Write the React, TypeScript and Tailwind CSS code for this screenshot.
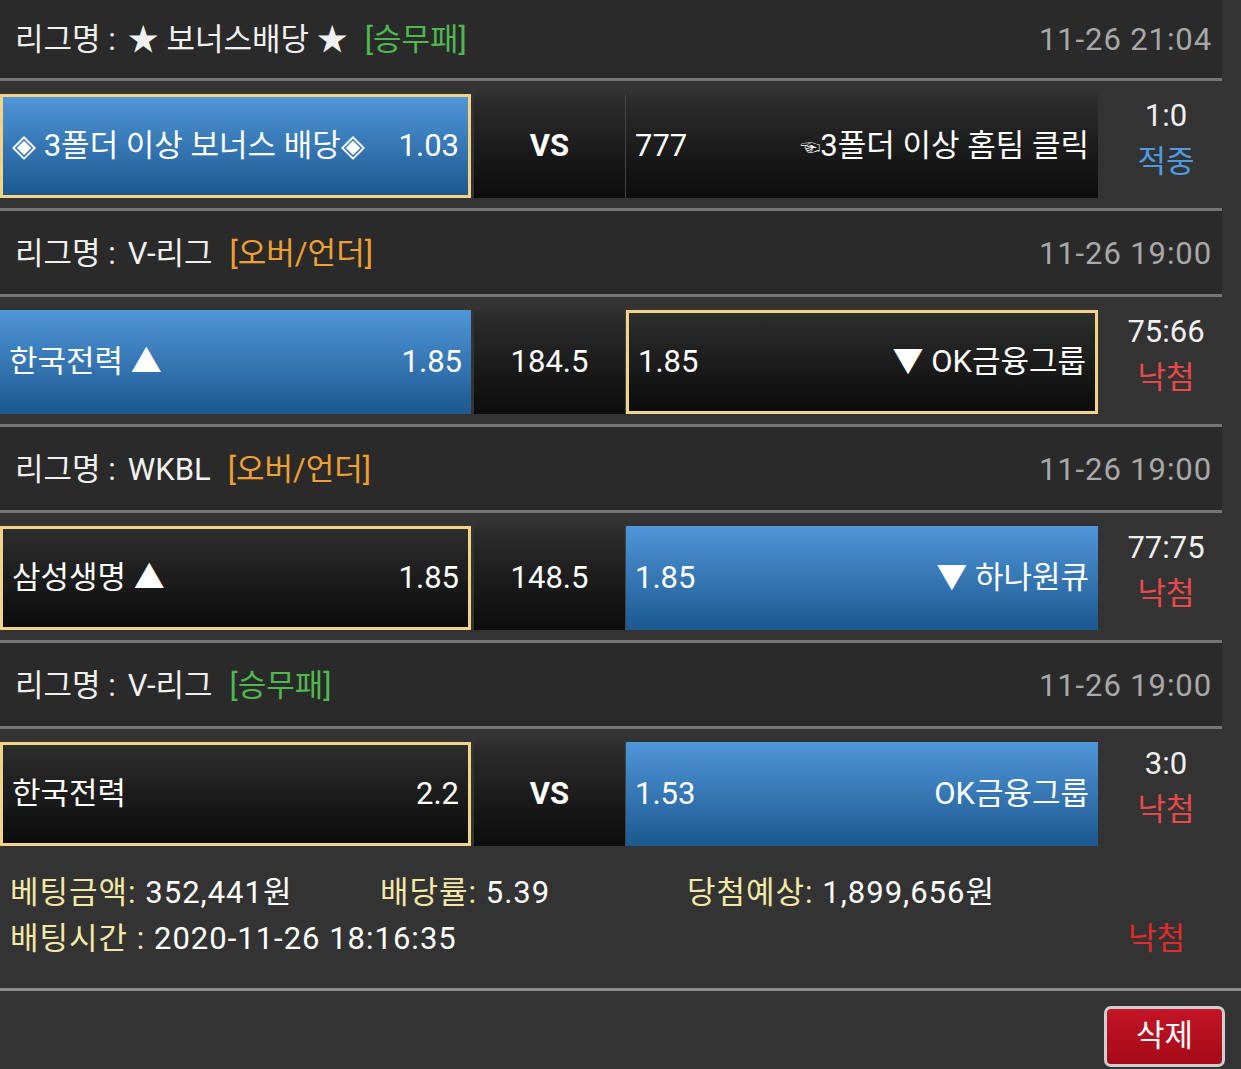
import React from 'react';

type Cell = {
  left: React.ReactNode;
  right: React.ReactNode;
  variant: 'blue' | 'dark';
  selected?: boolean;
};

type Game = {
  league: string;
  type: string;
  typeColor: string;
  date: string;
  home: Cell;
  mid: string;
  midBold?: boolean;
  away: Cell;
  score: string;
  result: string;
  resultColor: string;
};

const games: Game[] = [
  {
    league: '★ 보너스배당 ★',
    type: '[승무패]',
    typeColor: 'text-[#4fb84f]',
    date: '11-26 21:04',
    home: { left: '◈ 3폴더 이상 보너스 배당◈', right: '1.03', variant: 'blue', selected: true },
    mid: 'VS',
    midBold: true,
    away: {
      left: '777',
      right: (
        <>
          <span className="text-[20px] align-middle">☜</span>3폴더 이상 홈팀 클릭
        </>
      ),
      variant: 'dark',
    },
    score: '1:0',
    result: '적중',
    resultColor: 'text-[#4d9be0]',
  },
  {
    league: 'V-리그',
    type: '[오버/언더]',
    typeColor: 'text-[#f0a030]',
    date: '11-26 19:00',
    home: { left: '한국전력 ▲', right: '1.85', variant: 'blue' },
    mid: '184.5',
    away: { left: '1.85', right: '▼ OK금융그룹', variant: 'dark', selected: true },
    score: '75:66',
    result: '낙첨',
    resultColor: 'text-[#e8474c]',
  },
  {
    league: 'WKBL',
    type: '[오버/언더]',
    typeColor: 'text-[#f0a030]',
    date: '11-26 19:00',
    home: { left: '삼성생명 ▲', right: '1.85', variant: 'dark', selected: true },
    mid: '148.5',
    away: { left: '1.85', right: '▼ 하나원큐', variant: 'blue' },
    score: '77:75',
    result: '낙첨',
    resultColor: 'text-[#e8474c]',
  },
  {
    league: 'V-리그',
    type: '[승무패]',
    typeColor: 'text-[#4fb84f]',
    date: '11-26 19:00',
    home: { left: '한국전력', right: '2.2', variant: 'dark', selected: true },
    mid: 'VS',
    midBold: true,
    away: { left: '1.53', right: 'OK금융그룹', variant: 'blue' },
    score: '3:0',
    result: '낙첨',
    resultColor: 'text-[#e8474c]',
  },
];

function OddsCell({ cell, width }: { cell: Cell; width: string }) {
  const bg =
    cell.variant === 'blue'
      ? 'bg-gradient-to-b from-[#4f97d9] to-[#1c5890]'
      : 'bg-gradient-to-b from-[#2e2e2e] to-[#0c0c0c]';
  const border = cell.selected ? 'border-[3px] border-[#f2d387]' : '';
  return (
    <div className={`${width} h-[104px] ${bg} ${border} flex items-center justify-between px-[9px] text-white whitespace-nowrap`}>
      <span>{cell.left}</span>
      <span>{cell.right}</span>
    </div>
  );
}

export default function App() {
  return (
    <div
      className="w-[1241px] h-[1069px] overflow-hidden bg-[#333333] text-[31px] text-white"
      style={{ fontFamily: 'Roboto, "Noto Sans CJK KR", sans-serif' }}
    >
      <div className="w-[1222px]">
        {games.map((g, i) => (
          <div key={i}>
            <div
              className={`${i === 0 ? 'h-[81px] pt-[3px]' : 'h-[86px] pt-[4px]'} bg-[#2a2a2a] border-b-[3px] border-[#767676] flex items-center justify-between pl-[15px] pr-[10px]`}
            >
              <div className="flex items-center gap-[17px] text-[#f0f0f0]">
                <span>
                  리그명 :<span className="ml-[12px]">{g.league}</span>
                </span>
                <span className={g.typeColor}>{g.type}</span>
              </div>
              <span className="text-[#a8a8a8] tracking-[0.9px]">{g.date}</span>
            </div>
            <div className={`h-[130px] pt-[13px] ${i < games.length - 1 ? 'border-b-[3px] border-[#767676]' : ''}`}>
              <div className="flex items-start">
                <OddsCell cell={g.home} width="w-[471px]" />
                <div className="w-[152px] ml-[3px] h-[104px] bg-gradient-to-b from-[#2e2e2e] to-[#0c0c0c] border-r border-[#444] flex items-center justify-center">
                  <span className={g.midBold ? 'font-bold' : ''}>{g.mid}</span>
                </div>
                <OddsCell cell={g.away} width="w-[472px]" />
                <div className="flex-1 h-[104px] pl-[12px] flex flex-col items-center justify-center leading-[46px] -mt-[7px]">
                  <span className="text-[#f0f0f0]">{g.score}</span>
                  <span className={g.resultColor}>{g.result}</span>
                </div>
              </div>
            </div>
          </div>
        ))}
      </div>

      <div className="h-[132px] border-b-[3px] border-[#8a8a8a] pt-[11px] pl-[10px] pr-[56px] tracking-[1px]">
        <div className="flex items-center h-[46px]">
          <div className="w-[370px]">
            <span className="text-[#f3e8a6]">베팅금액:</span> 352,441원
          </div>
          <div className="w-[307px]">
            <span className="text-[#f3e8a6]">배당률:</span> 5.39
          </div>
          <div>
            <span className="text-[#f3e8a6]">당첨예상:</span> 1,899,656원
          </div>
        </div>
        <div className="flex items-center justify-between h-[46px]">
          <div>
            <span className="text-[#f3e8a6]">배팅시간 :</span> 2020-11-26 18:16:35
          </div>
          <span className="text-[#e22a2a] tracking-normal">낙첨</span>
        </div>
      </div>

      <div className="flex justify-end pt-[15px] pr-[16px]">
        <button className="w-[121px] h-[61px] rounded-[7px] border-[3px] border-[#cfcfcf] bg-gradient-to-b from-[#c41426] to-[#a50a18] text-white text-[31px]">
          삭제
        </button>
      </div>
    </div>
  );
}
